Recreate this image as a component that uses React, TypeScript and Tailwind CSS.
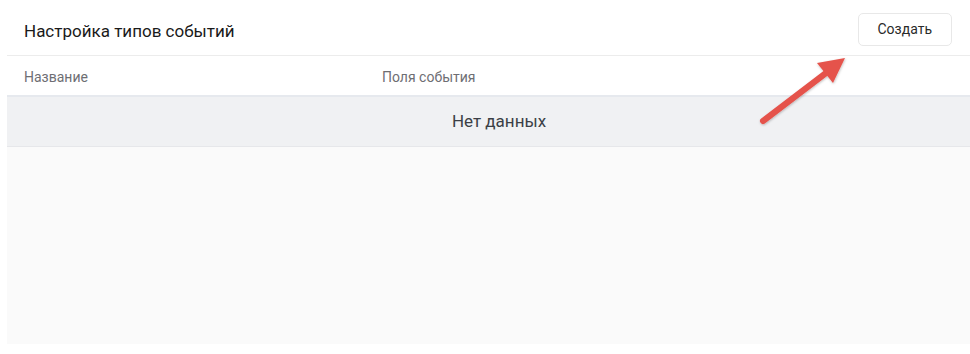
import React from 'react';

const columns = [
  { key: 'name', title: 'Название', width: 'w-[358px]' },
  { key: 'fields', title: 'Поля события', width: 'flex-1' },
];

export default function App() {
  return (
    <div className="relative w-[970px] h-[354px] bg-white font-['Roboto','Liberation_Sans',sans-serif] overflow-hidden">
      <div className="ml-[7px] flex flex-col">
        {/* Шапка */}
        <div className="h-[56px] flex items-center justify-between pl-[17px] pr-[18px] pt-[4px] border-b border-[#ececec]">
          <h1 className="text-[17px] text-[#1a1a1a] leading-none mt-[3px]">Настройка типов событий</h1>
          <button className="h-[33px] px-[19px] text-[14px] text-[#2a2a2a] bg-white border border-[#e8e8e8] rounded-[5px]">
            Создать
          </button>
        </div>

        {/* Заголовки таблицы */}
        <div className="h-[41px] flex items-center pl-[17px] pt-[3px] border-b-2 border-[#e6e9ee]">
          {columns.map((c) => (
            <div key={c.key} className={`${c.width} text-[14px] text-[#6e6e73]`}>
              {c.title}
            </div>
          ))}
        </div>

        {/* Пусто */}
        <div className="h-[50px] flex items-center justify-center pl-[21px] bg-[#f0f1f3] border-b border-[#e6e7ea]">
          <span className="text-[17px] text-[#3b3f46]">Нет данных</span>
        </div>

        <div className="h-[197px] bg-[#fafafa]" />
      </div>

      {/* Стрелка */}
      <svg className="absolute left-[750px] top-[50px]" width="110" height="85" viewBox="0 0 110 85">
        <defs>
          <filter id="sh" x="-20%" y="-20%" width="140%" height="140%">
            <feDropShadow dx="0.5" dy="1" stdDeviation="1" floodColor="#000" floodOpacity="0.25" />
          </filter>
        </defs>
        <g filter="url(#sh)">
          <line x1="13" y1="71" x2="76" y2="23" stroke="#e5534b" strokeWidth="6" strokeLinecap="round" />
          <polygon points="95,8 67,13 83,33" fill="#e5534b" />
        </g>
      </svg>
    </div>
  );
}
